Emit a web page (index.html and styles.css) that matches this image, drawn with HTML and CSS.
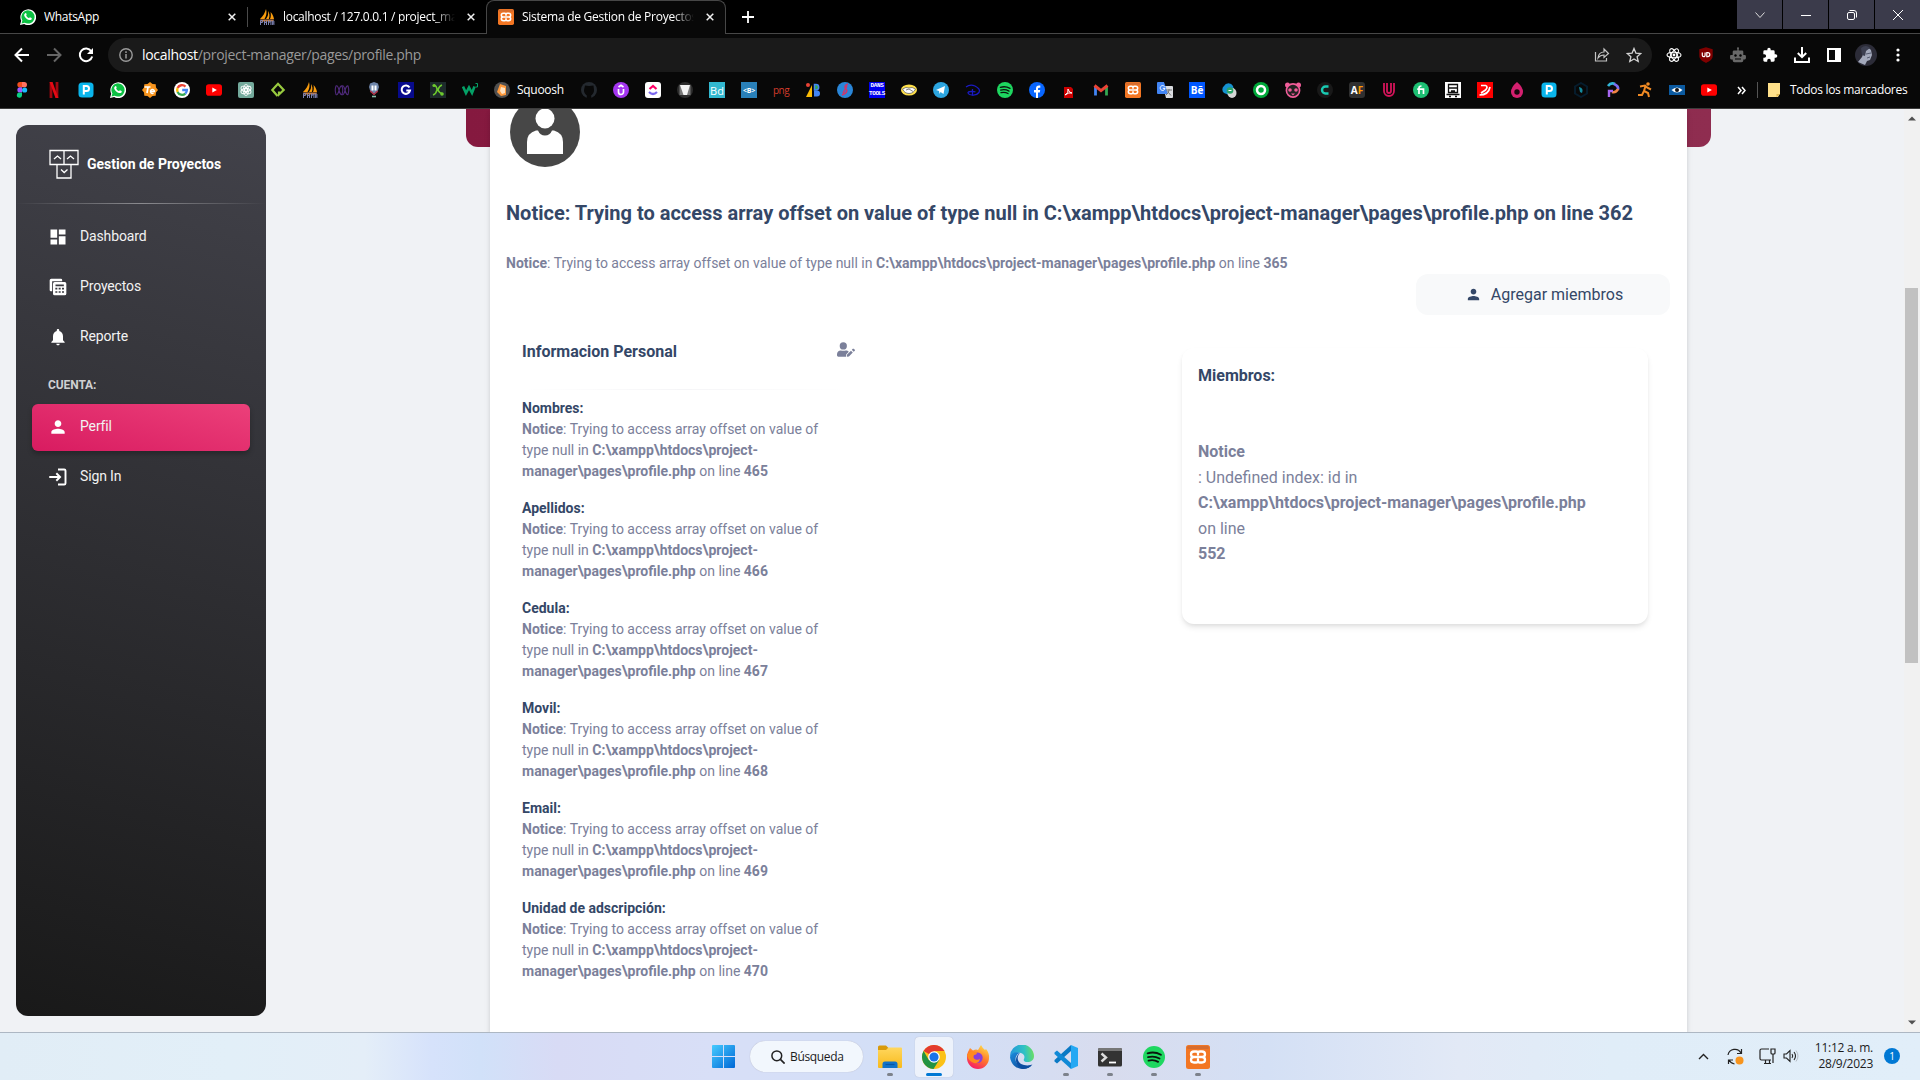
FILE: index.html
```html
<!DOCTYPE html>
<html lang="es">
<head>
<meta charset="utf-8">
<title>Sistema de Gestion de Proyectos</title>
<link rel="stylesheet" href="styles.css">
</head>
<body>
<svg class="defs" width="0" height="0">
  <defs>
    <linearGradient id="gFolder" x1="0" y1="0" x2="0" y2="1"><stop offset="0" stop-color="#ffd75e"/><stop offset="1" stop-color="#f8ba1c"/></linearGradient>
    <linearGradient id="gWin" x1="0" y1="0" x2="1" y2="1"><stop offset="0" stop-color="#45cbff"/><stop offset="1" stop-color="#0067d6"/></linearGradient>
    <linearGradient id="gFox" x1=".8" y1="0" x2=".3" y2="1"><stop offset="0" stop-color="#ffe14a"/><stop offset=".5" stop-color="#ff7a2a"/><stop offset="1" stop-color="#f5196a"/></linearGradient>
    <linearGradient id="gEdge" x1="0" y1=".4" x2="1" y2=".3"><stop offset="0" stop-color="#2496dc"/><stop offset=".6" stop-color="#2fc2c4"/><stop offset="1" stop-color="#6fe05c"/></linearGradient>
    <linearGradient id="gBlue" x1="0" y1="0" x2="1" y2="1"><stop offset="0" stop-color="#1c8ede"/><stop offset="1" stop-color="#0a3c8c"/></linearGradient>
    <symbol id="whatsapp" viewBox="0 0 16 16"><path d="M0 16l1.2-4.2A7.9 7.9 0 1 1 4.2 15z" fill="#fff"/><path d="M1.500 14.500l.9-3A6.600 6.600 0 1 1 4.700 13.700z" fill="#0cc143"/><path d="M5.300 4.200c.6-.3.900 0 1.100.6.300.8.400.9 0 1.400-.3.400-.3.500 0 .9.600.9 1.300 1.500 2.200 1.900.3.100.5.100.7-.2.500-.7.600-.7 1.100-.4l1.200.6c.3.200.2.900-.1 1.400-.5.600-1.600.9-2.600.6C6.400 10.300 4.600 8.400 4.200 6.600c-.200-.9.300-2 1.100-2.400z" fill="#fff"/></symbol>
    <symbol id="pma" viewBox="0 0 16 16"><path d="M7 0c1 3 .5 7-1.500 10H1C4 7 6 4 7 0zM9 2c1.500 2 2 5 .8 8H7C9 7.500 9.500 5 9 2zM11.500 3c2 2 3 4 3.500 7h-4c1-2 1-4.500.5-7z" fill="#f89c0e"/><path d="M1 10.500h14l-1 2H2z" fill="#c87b3a"/><path d="M1.500 16v-4.500h2v2h-2m4-2V16m0-2.500h2V16m0-4.500V16m2 0v-4.500l1.200 2 1.200-2V16m1.500 0v-4h1.500v4m-1.500-2h1.500" fill="none" stroke="#7b80b0" stroke-width="1"/></symbol>
    <symbol id="xampp" viewBox="0 0 24 24"><rect width="24" height="24" rx="2.500" fill="#f37623"/><rect x="1" y="1" width="22" height="3" rx="1.500" fill="#c96a34" opacity=".7"/><path d="M12 9.500V8.300q0-1.800-1.800-1.800H8Q5 6.500 5 9.300 5 12 8 12 5 12 5 14.800 5 17.500 8 17.500h2.200q1.800 0 1.800-1.800v-1.200M12 9.500V8.300q0-1.800 1.800-1.800H16q3 0 3 2.800Q19 12 16 12q3 0 3 2.800 0 2.700-3 2.700h-2.200q-1.800 0-1.800-1.800v-1.200M8 12h8" fill="none" stroke="#fff" stroke-width="2.300" stroke-linecap="round"/></symbol>
    <symbol id="spotify" viewBox="0 0 24 24"><circle cx="12" cy="12" r="12" fill="#1ed760"/><path d="M5 8c5-1.500 10-1 14.500 1.500M5.500 12.200c4.500-1.300 8.500-.8 12.500 1.400M6 16c4-1 7.500-.5 10.500 1.300" fill="none" stroke="#0a160d" stroke-width="2" stroke-linecap="round"/></symbol>
    <symbol id="youtube" viewBox="0 0 16 16"><rect y="2.300" width="16" height="11.400" rx="2.800" fill="#f00"/><path d="M6.300 5.500l4.600 2.500-4.600 2.500z" fill="#fff"/></symbol>
    <symbol id="close" viewBox="0 0 8 8"><path d="M.7.7l6.600 6.600M7.300.7L.7 7.300" stroke="#f1f1f1" stroke-width="1.500"/></symbol>
    <symbol id="person" viewBox="0 0 24 24"><path d="M12 12c2.200 0 4-1.800 4-4s-1.800-4-4-4-4 1.800-4 4 1.800 4 4 4zm0 2c-2.700 0-8 1.300-8 4v2h16v-2c0-2.700-5.300-4-8-4z" fill="currentColor"/></symbol>
    <symbol id="parking" viewBox="0 0 16 16"><rect width="15" height="15" x=".5" y=".5" rx="3.500" fill="#0ab5ec"/><path d="M5.800 12.500V4h2.700a2.400 2.400 0 0 1 0 5H6" fill="none" stroke="#fff" stroke-width="2"/></symbol>
  </defs>
</svg>

<header class="browser">
  <div class="tabs">
    <div class="tab tab-first"><svg class="i16"><use href="#whatsapp"/></svg><span class="tab-title">WhatsApp</span><svg class="x"><use href="#close"/></svg></div>
    <div class="tab tab-second"><svg class="i16"><use href="#pma"/></svg><span class="tab-title">localhost / 127.0.0.1 / project_ma</span><svg class="x"><use href="#close"/></svg></div>
    <div class="tab tab-active"><svg class="i16"><use href="#xampp"/></svg><span class="tab-title">Sistema de Gestion de Proyectos</span><svg class="x"><use href="#close"/></svg></div>
    <svg class="plus" viewBox="0 0 12 12"><path d="M6 0v12M0 6h12" stroke="#fff" stroke-width="1.800"/></svg>
    <div class="win-buttons">
      <span class="wb"><svg width="12" height="12"><path d="M1.500 3.500L6 8.500l4.500-5" fill="none" stroke="#ddd"/></svg></span>
      <span class="wb"><svg width="12" height="12"><path d="M1 6.500h10" stroke="#fff"/></svg></span>
      <span class="wb"><svg width="12" height="12"><rect x="1.500" y="3.500" width="7" height="7" rx="1.500" fill="none" stroke="#fff"/><path d="M3.500 1.500H8a2.500 2.500 0 0 1 2.500 2.500v4.500" fill="none" stroke="#fff"/></svg></span>
      <span class="wb"><svg width="12" height="12"><path d="M1 1l10 10M11 1L1 11" stroke="#fff"/></svg></span>
    </div>
  </div>

  <div class="toolbar">
    <svg class="nav" viewBox="0 0 16 16"><path d="M15 8H2M8 1.500L1.500 8 8 14.500" fill="none" stroke="#fff" stroke-width="2"/></svg>
    <svg class="nav" viewBox="0 0 16 16"><path d="M1 8h13M8 1.500L14.500 8 8 14.500" fill="none" stroke="#666" stroke-width="2"/></svg>
    <svg class="nav" viewBox="0 0 16 16"><path d="M13.300 4.200A6.300 6.300 0 1 0 14.200 9.500" fill="none" stroke="#fff" stroke-width="2"/><path d="M15 1v6H9z" fill="#fff"/></svg>
    <div class="omnibox">
      <svg width="14" height="14" viewBox="0 0 14 14"><circle cx="7" cy="7" r="6.200" fill="none" stroke="#9a9a9a" stroke-width="1.400"/><path d="M7 6v4.500M7 3.300v1.600" stroke="#9a9a9a" stroke-width="1.500"/></svg>
      <span class="url"><b>localhost</b>/project-manager/pages/profile.php</span>
      <svg class="share" width="16" height="16" viewBox="0 0 16 16"><path d="M1.500 5v9h11v-3M4 11c.5-4 2.500-6 6-6V2l4.500 4.500L10 10.500V8C7.500 8 5.500 9 4 11z" fill="none" stroke="#c4c4c4" stroke-width="1.200"/></svg>
      <svg width="16" height="16" viewBox="0 0 16 16"><path d="M8 1.500l1.900 4.600 4.900.4-3.700 3.200 1.100 4.800L8 12l-4.200 2.500 1.100-4.800L1.200 6.500l4.900-.4z" fill="none" stroke="#d2d2d2" stroke-width="1.300"/></svg>
    </div>
    <div class="extensions">
      <svg class="i16" viewBox="0 0 16 16"><g fill="none" stroke="#fff" stroke-width="1.100"><ellipse cx="8" cy="8" rx="7" ry="2.800"/><ellipse cx="8" cy="8" rx="7" ry="2.800" transform="rotate(60 8 8)"/><ellipse cx="8" cy="8" rx="7" ry="2.800" transform="rotate(120 8 8)"/></g><circle cx="8" cy="8" r="1.400" fill="#fff"/></svg>
      <svg class="i16" viewBox="0 0 16 16"><path d="M8 .3l6.700 2V9c0 3.500-3.500 5.500-6.700 6.900C4.800 14.500 1.300 12.500 1.300 9V2.300z" fill="#800000"/><path d="M4.300 5.500v2.800a1.400 1.400 0 0 0 2.800 0V5.500" fill="none" stroke="#fff" stroke-width="1.200"/><path d="M8.800 5.600h1a2 2 0 0 1 0 4h-1z" fill="none" stroke="#fff" stroke-width="1.200"/></svg>
      <svg class="i16" viewBox="0 0 16 16"><path d="M7.300 3.500V2A1 1 0 1 1 8.700 2v1.500H12q1.300 0 1.300 1.300V8H15q1 0 1 2t-1 2.500h-1.700v1q0 1.800-1.800 1.800h-7q-1.800 0-1.800-1.800v-1H1q-1 0-1-2.500t1-2h1.700V4.800q0-1.300 1.300-1.300z" fill="#686868"/><circle cx="5.500" cy="8.500" r="1.200"/><circle cx="10.500" cy="8.500" r="1.200"/><path d="M5 12h6" stroke="#000"/></svg>
      <svg class="i16" viewBox="0 0 24 24"><path d="M20.500 11H19V7a2 2 0 0 0-2-2h-4V3.500a2.500 2.500 0 0 0-5 0V5H4a2 2 0 0 0-2 2v3.800h1.500a2.700 2.700 0 0 1 0 5.400H2V20c0 1.100.9 2 2 2h3.800v-1.500a2.700 2.700 0 0 1 5.400 0V22H17a2 2 0 0 0 2-2v-4h1.500a2.500 2.500 0 0 0 0-5z" fill="#fff"/></svg>
      <svg class="i16" viewBox="0 0 16 16"><path d="M8 0v10M3.800 6L8 10.200 12.200 6M1 10.500V15h14v-4.500" fill="none" stroke="#fff" stroke-width="2"/></svg>
      <svg class="i16" viewBox="0 0 16 16"><path d="M1 1h14v14H1zm2 2v10h6V3z" fill="#fff" fill-rule="evenodd"/></svg>
      <svg class="avatar-sm" viewBox="0 0 22 22"><circle cx="11" cy="11" r="11" fill="#2c2c38"/><path d="M10 5q4-2 6 1l1 5-2 5-3 1-2 4-7-3 4-5z" fill="#a3a9bb"/><path d="M6 4q5-4 9 0l-4 3-1 5-3-1z" fill="#3c3f50"/><path d="M11 10l5-1M12 14l3-1" stroke="#555b70"/></svg>
      <svg class="i16" viewBox="0 0 16 16"><circle cx="8" cy="3" r="1.600" fill="#fff"/><circle cx="8" cy="8" r="1.600" fill="#fff"/><circle cx="8" cy="13" r="1.600" fill="#fff"/></svg>
    </div>
  </div>

  <div class="bookmarks">
    <svg class="i16" viewBox="0 0 16 16"><path d="M8 0H6a2.600 2.600 0 0 0 0 5.300h2z" fill="#f24e1e"/><path d="M8 0h2.300a2.600 2.600 0 0 1 0 5.300H8z" fill="#ff7262"/><path d="M8 5.300H6a2.600 2.600 0 0 0 0 5.300h2z" fill="#a259ff"/><circle cx="10.600" cy="8" r="2.600" fill="#1abcfe"/><path d="M8 10.700H6A2.600 2.600 0 1 0 8 13.500z" fill="#0acf83"/></svg>
    <svg class="i16" viewBox="0 0 16 16"><path d="M5 0v16M11 0v16" stroke="#a1070f" stroke-width="2.800"/><path d="M3.600 0h2.900l5.900 16H9.500z" fill="#e50914"/></svg>
    <svg class="i16"><use href="#parking"/></svg>
    <svg class="i16"><use href="#whatsapp"/></svg>
    <svg class="i16" viewBox="0 0 16 16"><path d="M8 0l2.500 2 3.200.3.300 3.200L16 8l-2 2.500-.3 3.200-3.200.3L8 16l-2.500-2-3.200-.3L2 10.500 0 8l2-2.500.3-3.200L5.500 2z" fill="#f7941d"/><path d="M2.500 5h6M6 5l-1 6" stroke="#fff" stroke-width="1.700"/><path d="M8.500 9.500h4a2 2 0 1 0-1 1.700" fill="none" stroke="#fff" stroke-width="1.400"/></svg>
    <svg class="i16" viewBox="0 0 16 16"><circle cx="8" cy="8" r="8" fill="#fff"/><g fill="none" stroke-width="2.300"><path d="M11.500 4.600A4.900 4.900 0 0 0 3.600 6" stroke="#ea4335"/><path d="M3.600 6a4.900 4.900 0 0 0 0 4" stroke="#fbbc05"/><path d="M3.600 10a4.900 4.900 0 0 0 7.700 1.600" stroke="#34a853"/><path d="M11.300 11.600A4.900 4.900 0 0 0 12.900 8H8.200" stroke="#4285f4"/></g></svg>
    <svg class="i16"><use href="#youtube"/></svg>
    <svg class="i16" viewBox="0 0 16 16"><rect width="16" height="16" rx="2" fill="#74aa9c"/><g fill="none" stroke="#fff" stroke-width=".9"><ellipse cx="8" cy="6" rx="2.400" ry="3.500"/><ellipse cx="8" cy="6" rx="2.400" ry="3.500" transform="rotate(60 8 8)"/><ellipse cx="8" cy="6" rx="2.400" ry="3.500" transform="rotate(120 8 8)"/><ellipse cx="8" cy="6" rx="2.400" ry="3.500" transform="rotate(180 8 8)"/><ellipse cx="8" cy="6" rx="2.400" ry="3.500" transform="rotate(240 8 8)"/><ellipse cx="8" cy="6" rx="2.400" ry="3.500" transform="rotate(300 8 8)"/></g></svg>
    <svg class="i16" viewBox="0 0 16 16"><path d="M5.500 4.500L8 1.800 13.700 8 9 12.500V9.500M5.500 4.500L2.300 8l5.200 6" fill="none" stroke="#98ca3f" stroke-width="2.200"/></svg>
    <svg class="i16"><use href="#pma"/></svg>
    <svg class="i16" viewBox="0 0 16 16"><path d="M2 12.500q-1.500-4.500 0-8.500 1.500-1.500 3 4 1.500 5.500 3 4.500 1.500-4.500 0-8.500-1.500-1-3 4.500-1.500 5.500-3 4M8 4q1.500-1.500 3 4 1.500 5.500 3 4.500 1.500-4.500 0-8.500-1.500-1-3 4.500-1.500 5.500-3 4" fill="none" stroke="#4f2a7c" stroke-width="1.100"/></svg>
    <svg class="i16" viewBox="0 0 16 16"><path d="M4 1.500L8 0l4 1.500L13 5l-1.500 5L8 13l-3.500-3L3 5z" fill="#6f86aa"/><path d="M5.500 3.500h2v5h-2zM8.500 3.500h2v5h-2z" fill="#fff"/><path d="M4.200 9L8 12.500 11.800 9" fill="none" stroke="#b3263a" stroke-width="1.200"/><path d="M6 14.500h4" stroke="#8ba" stroke-width="1.600"/></svg>
    <svg class="i16" viewBox="0 0 16 16"><rect width="16" height="16" fill="#070a8c"/><path d="M11.500 5.500A4.200 4.200 0 1 0 12 8.500H8.300" fill="none" stroke="#fff" stroke-width="2"/></svg>
    <svg class="i16" viewBox="0 0 16 16"><rect width="16" height="16" fill="#1d2b2b"/><path d="M4 3q3 1 3 5-1 4-4 5M12 3Q9 4 8 8q1 3 5 4" fill="none" stroke="#6dc92e" stroke-width="1.500"/><circle cx="4" cy="3.500" r="1.600" fill="#6dc92e"/><circle cx="12" cy="12" r="1.800" fill="#6dc92e"/></svg>
    <svg class="i16" viewBox="0 0 16 16"><path d="M1 4.500L4 11l3-5.500L10 11l2.500-6.500" fill="none" stroke="#04a066" stroke-width="2.600"/><path d="M13.500 1.500h2v3.500h-2" fill="none" stroke="#04a066"/></svg>
    <span class="bookmark"><svg class="i16" viewBox="0 0 16 16"><circle cx="8" cy="8" r="8" fill="#505050"/><path d="M6 2l6 2v9l-5 1-4-4z" fill="#ff9a3c"/><path d="M7 5l4 1v5l-3 1-2-3z" fill="#ffe3c2"/></svg>Squoosh</span>
    <svg class="i16" viewBox="0 0 16 16"><circle cx="8" cy="8" r="8" fill="#24292f"/><path d="M5.800 16v-2.600C3.800 11.900 3 10.500 3 8l1-4.500L8 4l4.500-.5L13 8c0 2.500-.8 3.900-2.800 5.400V16z" fill="#080808"/></svg>
    <svg class="i16" viewBox="0 0 16 16"><circle cx="8" cy="8" r="8" fill="#a435f0"/><path d="M5.500 7v3a2.500 2.500 0 0 0 5 0V7M5.500 5L8 3.300 10.500 5" fill="none" stroke="#fff" stroke-width="1.700"/></svg>
    <svg class="i16" viewBox="0 0 16 16"><rect width="16" height="16" rx="3" fill="#fff"/><path d="M4.500 7L8 4l3.500 3" fill="none" stroke="#f06" stroke-width="2.200"/><path d="M4 10q4 4 8 0" fill="none" stroke="#7b68ee" stroke-width="2.200"/></svg>
    <svg class="i16" viewBox="0 0 16 16"><circle cx="8" cy="8" r="8" fill="#2d2d2d"/><path d="M2.500 3h11v10h-11z" fill="#777"/><path d="M3 3h10l-3 10H6.500z" fill="#f4f4f4"/></svg>
    <span class="chip chip-bd">Bd</span>
    <span class="chip chip-b">&lt;B&gt;</span>
    <span class="chip chip-png">png</span>
    <svg class="i16" viewBox="0 0 16 16"><circle cx="3" cy="3" r="2" fill="#ea4335"/><path d="M1 15L7 3v12z" fill="#fbbc05"/><path d="M9.500 2.500H11a2.700 2.700 0 0 1 0 5.400H9.500z" fill="#34a853" stroke="#4285f4" stroke-width="1.500"/><path d="M9 8.500h3a3 3 0 0 1 0 6H9z" fill="#4285f4"/></svg>
    <svg class="i16" viewBox="0 0 16 16"><circle cx="8" cy="8" r="8" fill="#2a86d8"/><path d="M11 2q-5 2-2 5t-4 6M10 4L6 11" fill="none" stroke="#d0366b" stroke-width="1.500"/></svg>
    <span class="chip chip-dans"><span>DANS</span><span>TOOLS</span></span>
    <svg class="i16" viewBox="0 0 16 16"><ellipse cx="8" cy="8" rx="8" ry="5.500" fill="#ffe04a"/><path d="M1.500 7Q5 4.500 8 6q3-1.500 6.500 1-2 4.500-6.500 4.500T1.500 7z" fill="#fff" stroke="#666" stroke-width=".8"/><path d="M5 8l3-1 4 2.500" fill="none" stroke="#666" stroke-width=".8"/></svg>
    <svg class="i16" viewBox="0 0 16 16"><circle cx="8" cy="8" r="8" fill="#2ca5e0"/><path d="M3 8l9-4-1.500 8-3-2L6.500 12 6 9z" fill="#fff"/></svg>
    <svg class="i16" viewBox="0 0 16 16"><path d="M1 5Q5 2 10 4q6 3 4 6.500-3 4-9.500 2Q1 10 5.500 9.500q3-.500 5 .5M7.500 7v7" fill="none" stroke="#1a1ac4" stroke-width="1.300"/></svg>
    <svg class="i16"><use href="#spotify"/></svg>
    <svg class="i16" viewBox="0 0 16 16"><circle cx="8" cy="8" r="8" fill="#0866ff"/><path d="M7 16v-5.500H5V8h2V6.500Q7 3.500 10 3.500h1.300v2.300H10q-1 0-1 1V8h2.200l-.4 2.500H9V16z" fill="#fff"/></svg>
    <svg class="i16" viewBox="0 0 16 16"><path d="M3 5h7l2 2v9H3z" fill="#c00"/><path d="M4 13q4-2 3-6 1 4 4 4-3-1-7 2z" fill="none" stroke="#fff"/></svg>
    <svg class="i16" viewBox="0 0 16 16"><path d="M2.500 13.500V4" stroke="#4285f4" stroke-width="2.800"/><path d="M13.500 13.500V4" stroke="#34a853" stroke-width="2.800"/><path d="M1.500 3.500L8 8.700l6.500-5.200" fill="none" stroke="#ea4335" stroke-width="3"/></svg>
    <svg class="i16"><use href="#xampp"/></svg>
    <svg class="i16" viewBox="0 0 16 16"><path d="M6 4h9q1 0 1 1v10q0 1-1 1H9z" fill="#dadce0"/><path d="M0 1q0-1 1-1h6l4 12H1q-1 0-1-1z" fill="#4285f4"/><path d="M7.500 4.500A2.400 2.400 0 1 0 8 6.300H5.800" fill="none" stroke="#fff"/><path d="M9 8h6M12 7v1q0 3-3 5M10.500 9.500l3.500 4" fill="none" stroke="#777"/></svg>
    <span class="chip chip-be">Bē</span>
    <svg class="i16" viewBox="0 0 16 16"><path d="M3 11a4.500 4.500 0 0 1 0-7 5 5 0 0 1 9 0l1 4-5 5z" fill="#1591cf"/><ellipse cx="11" cy="11" rx="4.500" ry="5" fill="#d5d5d5"/><circle cx="9" cy="8.500" r="3.300" fill="#2aa567"/><path d="M7.500 8.500l3 0" stroke="#fff"/></svg>
    <svg class="i16" viewBox="0 0 16 16"><circle cx="8" cy="8" r="8" fill="#00a83a"/><circle cx="8" cy="8" r="4" fill="none" stroke="#fff" stroke-width="2.500"/></svg>
    <svg class="i16" viewBox="0 0 16 16"><circle cx="2.500" cy="3" r="2.500" fill="#f05d99"/><circle cx="13.500" cy="3" r="2.500" fill="#f05d99"/><circle cx="8" cy="8.500" r="6.600" fill="#222" stroke="#f05d99" stroke-width="1.600"/><circle cx="5" cy="8" r="1.800" fill="#f05d99"/><circle cx="11" cy="8" r="1.800" fill="#f05d99"/><path d="M6 11.500h4l-2 2z" fill="#f05d99"/></svg>
    <svg class="i16" viewBox="0 0 16 16"><circle cx="8" cy="8" r="8" fill="#191919"/><path d="M11.500 4.500H8.500a3.500 3.500 0 0 0 0 7h3" fill="none" stroke="#19cbb3" stroke-width="2.400"/></svg>
    <span class="chip chip-af">A<i>F</i></span>
    <svg class="i16" viewBox="0 0 16 16"><path d="M3 1v8a5 5 0 0 0 10 0V1M6 1v8a2 2 0 0 0 4 0V1" fill="none" stroke="#d4145a" stroke-width="1.800"/></svg>
    <svg class="i16" viewBox="0 0 16 16"><circle cx="8" cy="8" r="8" fill="#1dbf73"/><path d="M6 12V6q0-2 2.500-2M4.200 7.200h6.300V12" fill="none" stroke="#fff" stroke-width="1.700"/></svg>
    <svg class="i16" viewBox="0 0 16 16"><rect width="16" height="16" fill="#fff"/><path d="M3.500 2.500h9v8h-9zM3.500 6h9M1.500 12.500h13M4 14.500h2M10 14.500h2M6 9h4" fill="none" stroke="#111" stroke-width="1.300"/></svg>
    <svg class="i16" viewBox="0 0 16 16"><rect width="16" height="16" fill="#f00"/><path d="M4 3.500h4.500q3 1 0 4.500L4 11M2.500 13q9 0 10.500-8" fill="none" stroke="#fff" stroke-width="1.700"/></svg>
    <svg class="i16" viewBox="0 0 16 16"><path d="M8 0q6 5 6 10a6 6 0 0 1-12 0Q2 5 8 0z" fill="#d4206f"/><circle cx="8" cy="10" r="2.700" fill="#18060d"/></svg>
    <svg class="i16"><use href="#parking"/></svg>
    <svg class="i16" viewBox="0 0 16 16"><path d="M8 1l6 3.500v7L8 15l-6-3.500v-7z" fill="none" stroke="#061c2c" stroke-width="2"/><path d="M6 5q5 1 3 6l-2-1z" fill="#158ca0"/></svg>
    <svg class="i16" viewBox="0 0 16 16"><path d="M3 4q3-4 7-2" fill="none" stroke="#32b6d8" stroke-width="2.600"/><path d="M9 2q5 2 4 6" fill="none" stroke="#7b6cf0" stroke-width="2.600"/><path d="M13 7q-2 4-6 3" fill="none" stroke="#f08444" stroke-width="2.600"/><path d="M4 15V9h4" fill="none" stroke="#a766f0" stroke-width="2.400"/></svg>
    <svg class="i16" viewBox="0 0 16 16"><circle cx="11" cy="2" r="1.800" fill="#f08a24"/><path d="M3 4.500l5-1 2 2 4 2M8.500 4L7 9l4 2 1 4M7 9l-2 4H1" fill="none" stroke="#f08a24" stroke-width="2"/></svg>
    <svg class="i16" viewBox="0 0 16 16"><rect y="3" width="16" height="10" fill="#0b5aa0"/><path d="M2.500 8q5.500-5 11 0-5.500 5-11 0z" fill="#fff"/><circle cx="8" cy="8" r="2" fill="#111"/></svg>
    <svg class="i16"><use href="#youtube"/></svg>
    <svg class="more" width="9" height="9" viewBox="0 0 9 9"><path d="M1 1l3 3.500L1 8M5 1l3 3.500L5 8" fill="none" stroke="#fff" stroke-width="1.500"/></svg>
    <span class="sep"></span>
    <span class="bookmark all"><svg width="12" height="14" viewBox="0 0 12 14"><path d="M0 0h12v10.500L10 14H0z" fill="#ffe08a"/><path d="M8.500 14v-3H12" fill="#e0b64c"/></svg>Todos los marcadores</span>
  </div>
</header>

<main class="page">
  <aside class="sidebar">
    <div class="brand">
      <svg width="30" height="30" viewBox="0 0 30 30" fill="none" stroke="#fff" stroke-width="1.300"><path d="M1 1.500h14v14H1zM15 1.500h14v14H15zM8 15.500h14V29H8z"/><path d="M5 10l3.500-3L12 10M18 10l3.500-3 3.500 3M12 20.500l3.200 3 3.300-3"/></svg>
      <span>Gestion de Proyectos</span>
    </div>
    <div class="rule"></div>
    <nav class="menu">
      <a class="item"><svg viewBox="0 0 24 24"><path d="M3 13h8V3H3v10zm0 8h8v-6H3v6zm10 0h8V11h-8v10zm0-18v6h8V3h-8z" fill="#fff"/></svg>Dashboard</a>
      <a class="item"><svg viewBox="0 0 24 24"><path d="M4 17H3.500A1.500 1.500 0 0 1 2 15.500V4a2 2 0 0 1 2-2h11.500A1.500 1.500 0 0 1 17 3.500V5H5v12z" fill="#fff"/><path d="M8 6h12a2 2 0 0 1 2 2v12a2 2 0 0 1-2 2H8a2 2 0 0 1-2-2V8a2 2 0 0 1 2-2zm1 3v2h10V9zm-.2 4v2h2.400v-2zm4 0v2h2.400v-2zm4 0v2h2.400v-2zm-8 4v2h2.400v-2zm4 0v2h2.400v-2zm4 0v2h2.400v-2z" fill="#fff" fill-rule="evenodd"/></svg>Proyectos</a>
      <a class="item"><svg viewBox="0 0 24 24"><path d="M12 22c1.100 0 2-.9 2-2h-4c0 1.100.9 2 2 2zm6-6v-5c0-3.100-1.600-5.600-4.500-6.300V4c0-.8-.7-1.500-1.500-1.500s-1.500.7-1.500 1.500v.7C7.600 5.400 6 7.900 6 11v5l-2 2v1h16v-1l-2-2z" fill="#fff"/></svg>Reporte</a>
      <h6 class="section">CUENTA:</h6>
      <a class="item active"><svg><use href="#person"/></svg>Perfil</a>
      <a class="item"><svg viewBox="0 0 24 24"><path d="M1.500 12H14M10 7.500l4.500 4.500-4.500 4.500M12 3h7.500A1.500 1.500 0 0 1 21 4.500v15a1.500 1.500 0 0 1-1.500 1.500H12" fill="none" stroke="#fff" stroke-width="2.300"/></svg>Sign In</a>
    </nav>
  </aside>

  <section class="content">
    <div class="banner"></div>
    <article class="card">
      <svg class="avatar" viewBox="0 0 70 70"><circle cx="35" cy="35" r="35" fill="#474747"/><ellipse cx="35" cy="21.500" rx="9.500" ry="10" fill="#fff"/><path d="M17 57V45q0-9 9-11.500h2q2 5 7 5t7-5h2q9 2.500 9 11.500v12z" fill="#fff"/></svg>
      <h5 class="title">Notice: Trying to access array offset on value of type null in C:\xampp\htdocs\project-manager\pages\profile.php on line 362</h5>
      <p class="subtitle"><b>Notice</b>: Trying to access array offset on value of type null in <b>C:\xampp\htdocs\project-manager\pages\profile.php</b> on line <b>365</b></p>
      <div class="actions"><a class="add"><svg><use href="#person"/></svg><span>Agregar miembros</span></a></div>
      <div class="columns">
        <div class="info">
          <div class="info-head">
            <h6>Informacion Personal</h6>
            <svg width="18" height="15" viewBox="0 0 640 512"><path d="M224 256A128 128 0 1 0 224 0a128 128 0 1 0 0 256zm90 32c-60 20-120 20-180 0C60 288 0 348 0 422v42c0 27 21 48 48 48h274l8-90 90-90c-30-30-60-44-106-44zm45 150l-8 66c-1 5 3 9 8 8l66-8 137-137-66-66zM633 268l-36-36c-9-9-25-9-35 0l-36 36 66 66 41-36c9-9 9-21 0-30z" fill="#7b809a"/></svg>
          </div>
          <div class="light-rule"></div>
          <dl class="fields">
            <div class="field"><dt>Nombres:</dt><dd><b>Notice</b>: Trying to access array offset on value of type null in <b>C:\xampp\htdocs\project-manager\pages\profile.php</b> on line <b>465</b></dd></div>
            <div class="field"><dt>Apellidos:</dt><dd><b>Notice</b>: Trying to access array offset on value of type null in <b>C:\xampp\htdocs\project-manager\pages\profile.php</b> on line <b>466</b></dd></div>
            <div class="field"><dt>Cedula:</dt><dd><b>Notice</b>: Trying to access array offset on value of type null in <b>C:\xampp\htdocs\project-manager\pages\profile.php</b> on line <b>467</b></dd></div>
            <div class="field"><dt>Movil:</dt><dd><b>Notice</b>: Trying to access array offset on value of type null in <b>C:\xampp\htdocs\project-manager\pages\profile.php</b> on line <b>468</b></dd></div>
            <div class="field"><dt>Email:</dt><dd><b>Notice</b>: Trying to access array offset on value of type null in <b>C:\xampp\htdocs\project-manager\pages\profile.php</b> on line <b>469</b></dd></div>
            <div class="field"><dt>Unidad de adscripción:</dt><dd><b>Notice</b>: Trying to access array offset on value of type null in <b>C:\xampp\htdocs\project-manager\pages\profile.php</b> on line <b>470</b></dd></div>
          </dl>
        </div>
        <div class="members">
          <h6>Miembros:</h6>
          <div class="members-body"><b>Notice</b><span>: Undefined index: id in</span><b>C:\xampp\htdocs\project-manager\pages\profile.php</b><span>on line</span><b>552</b></div>
        </div>
      </div>
    </article>
  </section>

  <div class="scrollbar">
    <svg width="8" height="5"><path d="M0 4.500h8L4 .5z" fill="#505050"/></svg>
    <div class="thumb"></div>
    <svg class="down" width="8" height="5"><path d="M0 .5h8l-4 4z" fill="#505050"/></svg>
  </div>
</main>

<footer class="taskbar">
  <div class="apps">
    <svg class="win" viewBox="0 0 24 24"><path d="M0 1q0-1 1-1h10.500v11.500H0zM12.500 0H23q1 0 1 1v10.500H12.500zM0 12.500h11.500V24H1q-1 0-1-1zM12.500 12.500H24V23q0 1-1 1H12.500z" fill="url(#gWin)"/></svg>
    <div class="search"><svg width="14" height="14" viewBox="0 0 14 14"><circle cx="5.800" cy="5.800" r="4.900" fill="none" stroke="#222" stroke-width="1.500"/><path d="M9.400 9.400l4.200 4.200" stroke="#222" stroke-width="1.700"/></svg><span>Búsqueda</span></div>
    <div class="app running"><svg viewBox="0 0 24 24"><path d="M0 2q0-1.500 1.500-1.500H8L10.500 3 9 5H0z" fill="#d99a0b"/><path d="M0 5h8l2.500-2.500H23q1 0 1 1V22q0 1-1 1H1q-1 0-1-1z" fill="url(#gFolder)"/><path d="M4.500 23v-4q0-2.500 2.500-2.500h10q2.500 0 2.500 2.500v4z" fill="#1273c8"/><path d="M7.500 19.500h9" stroke="#0a57a4" stroke-width="1.200"/></svg></div>
    <div class="app current"><svg viewBox="0 0 24 24"><circle cx="12" cy="12" r="12" fill="#fbc116"/><path d="M12 12L1.600 6A12 12 0 0 1 22.400 6H12z" fill="#e33b2e"/><path d="M1.600 6A12 12 0 0 0 11.500 24l5.700-9L12 12 6.800 15z" fill="#229342"/><circle cx="12" cy="12" r="5.800" fill="#fff"/><circle cx="12" cy="12" r="4.600" fill="#1a73e8"/></svg></div>
    <div class="app"><svg viewBox="0 0 24 24"><path d="M2 7l2-4 3 2.500q3-1.500 5-.5l3-5q2 4 4 5l1-1q3.500 4 3 9a11 11 0 0 1-22 0Q.8 9 2 7z" fill="url(#gFox)"/><circle cx="11.500" cy="12.800" r="5.200" fill="#8b3fd9"/><path d="M1 10q2-4 6-3.500l4 1q0 2-3 2.500-1.500 3 1.500 4.500 3 1 4.500-1Q13 19 8 18 2 16 1 10z" fill="#ff8a1f"/></svg></div>
    <div class="app"><svg viewBox="0 0 24 24"><path d="M0 12A12 12 0 0 1 24 11c0 4-3 6-6.500 6-3 0-4.500-1.500-3.500-3 1-2 .5-5-3-6C6 7 1 9 0 12z" fill="url(#gEdge)"/><path d="M0 12c1-4 6-6 10-4-4 1-6 6-3 10.500 3 4 9 4.500 15 1.500C17 26.500 2 26 0 12z" fill="url(#gBlue)"/><path d="M10 8c-4 4-3 10 4 12 4 1 7 0 8.500-.8C19 24 14 24.500 11 23 4 19.500 5 11 10 8z" fill="#0c4ea0"/></svg></div>
    <div class="app running"><svg viewBox="0 0 24 24"><path d="M17 0l7 3v18l-7 3z" fill="#25a8f3"/><path d="M17 0v6L3 18.500.5 16.500v-1.500z" fill="#0a79c4"/><path d="M17 24v-6L3 5.500.5 7.500V9z" fill="#1089d6"/></svg></div>
    <div class="app running"><svg viewBox="0 0 24 24"><rect y="3" width="24" height="18.500" rx="1.500" fill="#333"/><path d="M0 4.500Q0 3 1.500 3h21Q24 3 24 4.500V6H0z" fill="#777"/><path d="M3.500 8.500L8 12.500l-4.500 4" fill="none" stroke="#ddd" stroke-width="2.400"/><path d="M11 17.500h7" stroke="#fff" stroke-width="1.800"/></svg></div>
    <div class="app running"><svg class="round" viewBox="0 0 24 24"><use href="#spotify"/></svg></div>
    <div class="app running"><svg viewBox="0 0 24 24"><use href="#xampp"/></svg></div>
  </div>
  <div class="tray">
    <svg width="11" height="7"><path d="M1 6l4.500-4.500L10 6" fill="none" stroke="#222" stroke-width="1.400"/></svg>
    <svg class="sync" width="17" height="17" viewBox="0 0 17 17"><path d="M1 7a7 7 0 0 1 13-2M14.500 1v4.500H10M6 12H1.500v4M2 12q2 3.500 5.500 4" fill="none" stroke="#222" stroke-width="1.200"/><circle cx="12.500" cy="12.500" r="4" fill="#f7941d"/></svg>
    <svg class="net" width="17" height="16" viewBox="0 0 17 16"><path d="M10 1H2.500Q1 1 1 2.500v8Q1 12 2.500 12H12M5 15.500h7M6.500 12v3M10.500 12v3M12 1h4v4q0 1-1 1h-2q-1 0-1-1zM14 6v9" fill="none" stroke="#222" stroke-width="1.200"/></svg>
    <svg class="vol" width="16" height="14" viewBox="0 0 16 14"><path d="M1 5h2.500L7 1.500v11L3.500 9H1zM9 5q1.500 2 0 4M11 3q3 4 0 8" fill="none" stroke="#222" stroke-width="1.100"/><path d="M13 1.500q4 5.500 0 11" fill="none" stroke="#b5bcc4"/></svg>
    <div class="clock"><span>11:12 a. m.</span><span>28/9/2023</span></div>
    <span class="badge">1</span>
  </div>
</footer>
</body>
</html>
```
FILE: styles.css
```css
* { box-sizing: border-box; }
body {
  margin: 0;
  width: 1920px;
  height: 1080px;
  overflow: hidden;
  display: flex;
  flex-direction: column;
  font-family: Roboto, sans-serif;
  background: #f0f2f5;
}
.defs { position: absolute; }
svg { display: block; flex: none; }
h5, h6, p, dl, dd { margin: 0; }
.i16 { width: 16px; height: 16px; flex: none; }

/* browser frame */
.browser {
  height: 109px;
  background: #080808;
  border-bottom: 1px solid #3c3c3c;
  font-family: "Open Sans", "Noto Sans", sans-serif;
  font-size: 12px;
  color: #fff;
  flex: none;
}
.tabs {
  height: 34px;
  display: flex;
  background: #000;
  border-bottom: 1px solid #474747;
}
.tab { display: flex; align-items: center; height: 34px; position: relative; }
.tab-title { margin-left: 8px; flex: 1; overflow: hidden; white-space: nowrap; letter-spacing: -.3px; padding-bottom: 1px; }
.tab .x { width: 8px; height: 8px; margin-left: 12px; }
.tab-first { width: 248px; padding: 0 12px 0 20px; }
.tab-first::after { content: ""; position: absolute; right: 0; top: 7px; width: 1px; height: 20px; background: #4a4a4a; }
.tab-second { width: 238px; padding: 0 11px 0 11px; }
.tab-second .tab-title, .tab-active .tab-title {
  -webkit-mask-image: linear-gradient(90deg, #000 88%, transparent);
  mask-image: linear-gradient(90deg, #000 88%, transparent);
}
.tab-active {
  width: 240px;
  padding: 0 11px 1px 11px;
  background: #080808;
  border: 1px solid #474747;
  border-bottom: 0;
  border-radius: 8px 8px 0 0;
}
.tab-active .tab-title { letter-spacing: -.26px; }
.plus { width: 12px; height: 12px; margin: 11px 0 0 16px; }
.win-buttons { margin-left: auto; display: flex; gap: 1px; height: 29px; }
.wb { width: 45px; background: #3b3b4b; display: flex; align-items: center; justify-content: center; }

.toolbar { height: 42px; display: flex; align-items: center; padding-left: 14px; gap: 16px; }
.nav { width: 16px; height: 16px; }
.omnibox {
  width: 1544px;
  height: 34px;
  margin-left: -2px;
  padding: 0 10px 0 11px;
  border-radius: 17px;
  background: #1a1a1a;
  display: flex;
  align-items: center;
}
.url { margin-left: 9px; padding-bottom: 1px; font-size: 14px; color: #999; letter-spacing: -.32px; flex: 1; }
.url b { font-weight: 400; color: #fff; }
.share { margin-right: 16px; }
.extensions { display: flex; align-items: center; gap: 16px; margin-left: -2px; }
.avatar-sm { width: 22px; height: 22px; margin: 0 -3px; }

.bookmarks { height: 28px; display: flex; align-items: center; gap: 16px; padding-left: 14px; }
.bookmark { display: flex; align-items: center; gap: 7px; width: 71px; letter-spacing: -.3px; white-space: nowrap; line-height: 16px; }
.chip {
  width: 16px; height: 16px; flex: none;
  display: flex; align-items: center; justify-content: center;
  font-size: 10px; line-height: 1; color: #fff;
}
.chip-bd { background: #32b8d0; font-size: 11px; }
.chip-b { background: #2980b9; font-size: 7px; font-weight: 700; letter-spacing: -.3px; }
.chip-png { color: #d43c2c; font-size: 10px; letter-spacing: -.5px; }
.chip-dans { background: #0000f0; font: 700 6px/8px "Liberation Mono", monospace; flex-direction: column; }
.chip-dans span { letter-spacing: -.4px; }
.chip-be { background: #0057ff; font-size: 10px; font-weight: 700; }
.chip-af { background: #303030; border-radius: 3px; font-size: 10px; font-weight: 700; }
.chip-af i { color: #f90; font-style: normal; }
.more { margin: 0 3px 0 4px; }
.sep { width: 1px; height: 16px; background: #555; margin-left: -8px; }
.all { width: auto; gap: 10px; margin-left: -6px; }

/* page */
.page { flex: 1; display: flex; min-height: 0; overflow: hidden; }
.sidebar {
  width: 250px;
  height: 891px;
  margin: 16px 0 0 16px;
  flex: none;
  border-radius: 12px;
  background: linear-gradient(195deg, #42424a, #191919);
  color: #fff;
  font-size: 14px;
}
.brand { display: flex; align-items: center; gap: 8px; height: 78px; padding: 0 0 0 33px; font-weight: 700; letter-spacing: 0; }
.brand span { padding-bottom: 1px; }
.rule { height: 1px; background: linear-gradient(90deg, transparent, rgba(255,255,255,.4), transparent); }
.menu { padding: 9px 16px; }
.item { display: flex; align-items: center; gap: 12px; height: 47px; margin-bottom: 3px; padding: 0 16px 2px; font-weight: 400; color: #f2f2f2; letter-spacing: -.14px; }
.item svg { width: 20px; height: 20px; color: #fff; margin-top: 2px; }
.section { height: 38px; padding: 14px 16px 0; font-size: 12px; line-height: 16px; font-weight: 700; color: #d0d0d2; letter-spacing: -.1px; margin-bottom: 3px; }
.active {
  padding-bottom: 4px;
  margin-bottom: 2px;
  background: linear-gradient(195deg, #ec407a, #d81b60);
  border-radius: 6px;
  box-shadow: 0 3px 5px rgba(0,0,0,.25);
}
.content { width: 1245px; margin-left: 200px; flex: none; display: grid; grid-template-rows: 923px; }
.banner { grid-area: 1 / 1; height: 38px; border-radius: 0 0 12px 12px; background: linear-gradient(90deg, #85193f, #8f2d50); }
.card {
  grid-area: 1 / 1;
  margin: 0 24px;
  padding: 0 16px;
  background: #fff;
  box-shadow: 0 4px 6px rgba(0,0,0,.1), 0 2px 4px rgba(0,0,0,.06);
  color: #7b809a;
  font-size: 14px;
  line-height: 21px;
}
.avatar { width: 70px; height: 70px; margin: -12px 0 0 4px; }
.title { margin-top: 30px; font-size: 20px; line-height: 33px; font-weight: 700; color: #344767; white-space: nowrap; }
.subtitle { margin-top: 23px; white-space: nowrap; }
b { font-weight: 700; }
.actions { display: flex; justify-content: flex-end; }
.add {
  width: 254px; height: 41px; margin-right: 1px; padding-left: 2px;
  border-radius: 12px; background: #f8f9fa; color: #344767;
  font-size: 16px;
  display: flex; align-items: center; justify-content: center; gap: 9px;
}
.add svg { width: 17px; height: 17px; margin-bottom: 1px; }
.columns { display: flex; align-items: flex-start; justify-content: space-between; padding: 23px 23px 0 16px; }
.info { width: 340px; padding-top: 3px; }
h6 { font-size: 16px; line-height: 20px; font-weight: 700; color: #344767; }
.info-head { display: flex; justify-content: space-between; padding-right: 7px; }
.info-head h6 { padding-top: 1px; }
.info-head svg { margin-top: 1px; }
.light-rule { height: 1px; width: 324px; margin-top: 27px; background: linear-gradient(90deg, transparent, #f5f5f7, transparent); }
.fields { width: 322px; padding-top: 8px; }
.field { margin-bottom: 16px; }
dt { font-weight: 700; color: #344767; }
.members {
  width: 466px; height: 276px; margin-top: 10px; padding: 18px 16px 16px;
  border-radius: 12px; background: #fff;
  box-shadow: 0 4px 6px -1px rgba(0,0,0,.1), 0 2px 4px -1px rgba(0,0,0,.06);
  font-size: 16px;
}
.members-body { display: flex; flex-direction: column; line-height: 25.6px; padding-top: 53px; }
.scrollbar { width: 16px; margin-left: auto; background: #f1f1f1; display: flex; flex-direction: column; align-items: center; padding: 7px 1px 7px 0; }
.thumb { width: 13px; height: 375px; margin-top: 167px; background: #c1c1c1; }
.down { margin-top: auto; }

/* taskbar */
.taskbar {
  height: 48px; flex: none;
  border-top: 1px solid #adb7c3;
  background: linear-gradient(90deg, #e1edf6 0, #e2eff8 12%, #e4eef8 19%, #d6e2fb 22.500%, #d1e1f9 25%, #d8dbf5 29%, #d8dff7 37%, #d2dff7 48%, #d8dcee 58%, #d4e0f5 66%, #e2e9f6 76%, #e0edf8 84%, #e1eef9 100%);
  font-family: "Open Sans", "Noto Sans", sans-serif;
  font-size: 12px; color: #1c1c1c;
  display: flex; padding: 0 20px 0 712px;
}
.apps { display: flex; align-items: center; }
.win { width: 23px; height: 23px; margin-right: 15px; }
.search { width: 113px; flex: none; height: 31px; border-radius: 16px; background: #f2f7fd; box-shadow: 0 0 1px #aab; display: flex; align-items: center; padding-left: 21px; gap: 5px; margin-right: 8px; }
.search span { letter-spacing: -.35px; }
.app { width: 38px; flex: none; height: 40px; margin-right: 6px; display: flex; align-items: center; justify-content: center; border-radius: 4px; position: relative; }
.app svg { width: 24px; height: 24px; }
.app .round { width: 22px; height: 22px; }
.running::after, .current::after { content: ""; position: absolute; bottom: 1px; width: 6px; height: 3px; border-radius: 2px; background: #7d828b; }
.current { background: #edf2fb; box-shadow: 0 0 1px #aab; }
.current::after { width: 16px; background: #0078d4; }
.tray { margin-left: auto; display: flex; align-items: center; padding-bottom: 1px; }
.sync { margin-left: 18px; }
.net { margin-left: 15px; }
.vol { margin-left: 7px; }
.clock { width: 74px; display: flex; flex-direction: column; align-items: flex-end; line-height: 16px; letter-spacing: -.25px; }
.badge { width: 16px; height: 16px; margin-left: 11px; border-radius: 50%; background: #0078d4; color: #fff; font-size: 10px; line-height: 16px; text-align: center; }
```
